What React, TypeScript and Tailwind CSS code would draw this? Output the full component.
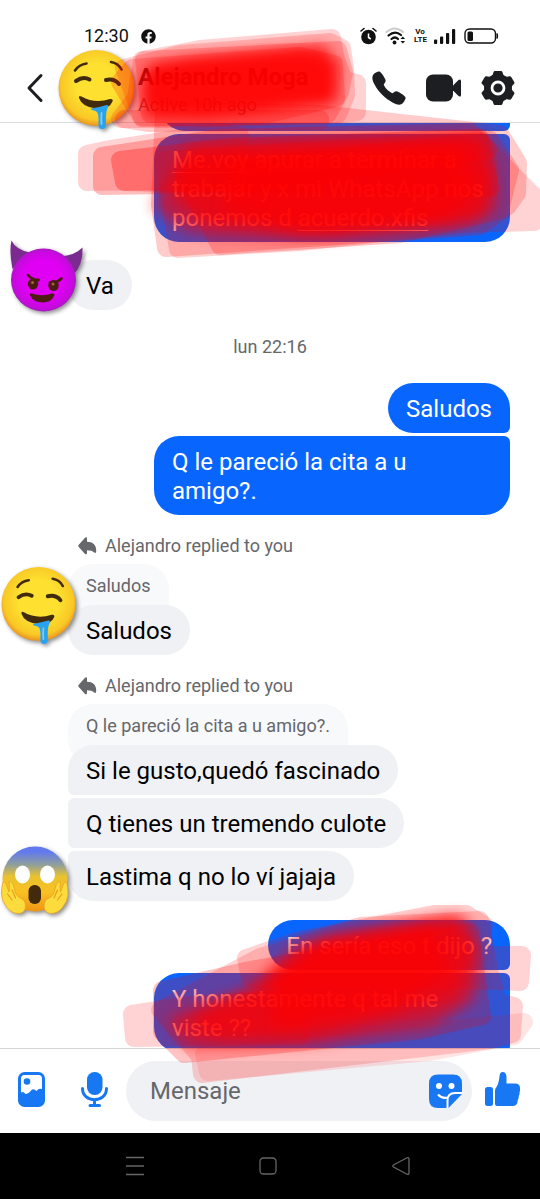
import type { ReactNode } from 'react'
import { FaFacebook } from 'react-icons/fa'
import { IoCall } from 'react-icons/io5'

const bubbleBase = 'px-[18px] pt-3 pb-[9px] text-2xl leading-[29px]'

function Sent({ children, className = '' }: { children: ReactNode; className?: string }) {
  return (
    <div className={`${bubbleBase} max-w-[356px] self-end bg-[#0866ff] text-white ${className}`}>
      {children}
    </div>
  )
}

function Received({ children, className = '' }: { children: ReactNode; className?: string }) {
  return (
    <div className={`${bubbleBase} relative self-start bg-[#f0f1f5] text-black ${className}`}>
      {children}
    </div>
  )
}

function ReplyLabel() {
  return (
    <div className="flex items-center gap-2 pt-5 pb-[7px] pl-[10px] text-lg leading-[22px] text-[#65676b]">
      <svg width="19" height="18" viewBox="0 0 19 18" fill="currentColor">
        <path d="M9 1.500v3.300c6 0 9.500 3.600 9.200 9.200 0 2-1 2.500-2 1.500-1.600-1.600-3.700-2.300-7.200-2.300v2.700c0 1.500-1.200 1.800-2.200.9L1 10.200a1.800 1.800 0 0 1 0-2.700L6.800 1C7.800 0 9 .2 9 1.500z" />
      </svg>
      <span>Alejandro replied to you</span>
    </div>
  )
}

function Quote({ children }: { children: ReactNode }) {
  return (
    <div className="-mb-[19px] h-[60px] self-start rounded-[25px] rounded-br-md bg-[#f8f9fb] px-[18px] pt-[11px] text-lg leading-[22px] text-[#65676b]">
      {children}
    </div>
  )
}

function DroolFace({ className = '' }: { className?: string }) {
  return (
    <svg viewBox="0 0 78 80" className={`drop-shadow-[2px_2px_2px_rgba(0,0,0,0.45)] ${className}`}>
      <defs>
        <radialGradient id="droolFill" cx="0.5" cy="0.45" r="0.55">
          <stop offset="0.5" stopColor="#fde030" />
          <stop offset="0.85" stopColor="#f9c825" />
          <stop offset="1" stopColor="#e8921f" />
        </radialGradient>
      </defs>
      <circle cx="38.500" cy="38" r="38" fill="url(#droolFill)" />
      <g fill="none" stroke="#422b0d" strokeLinecap="round">
        <path d="M17 20.500Q21 14.500 28.500 13.500" strokeWidth="2.600" />
        <path d="M53 12Q60 13 63.500 19.500" strokeWidth="2.600" />
        <path d="M18 31Q25 26 31.500 29.500" strokeWidth="4" />
        <path d="M48 30Q56 28 61 34" strokeWidth="4" />
      </g>
      <path d="M21 48q-.5-3 2.500-1.500Q37 54 52 49q3.500-.5 2.500 2.500Q51 60 38 58.500 24 57 21 48z" fill="#422b0d" />
      <path d="M33 58.500Q42 57 48.500 55q2.500-.5 1.500 2-2 4-2 10v7.500q0 4.500-3.800 4.500T40.500 75.500V68q0-7-4.500-7.500-3.500-.5-3-2z" fill="#29a3ee" />
      <path d="M43.500 63q-.5 6 0 11" stroke="#7dcdf8" strokeWidth="1.800" strokeLinecap="round" fill="none" />
    </svg>
  )
}

function DevilFace({ className = '' }: { className?: string }) {
  return (
    <svg viewBox="0 0 78 80" className={`drop-shadow-[2px_2px_2px_rgba(0,0,0,0.45)] ${className}`}>
      <defs>
        <radialGradient id="devilFill" cx="0.5" cy="0.5" r="0.52">
          <stop offset="0.6" stopColor="#e000f4" />
          <stop offset="0.88" stopColor="#c50add" />
          <stop offset="1" stopColor="#9c1fb4" />
        </radialGradient>
      </defs>
      <path d="M3.500 2.500Q1 13 4.500 31L22 14.500Q8 12 3.500 2.500zM74.500 9.500Q67 17.500 52 18.500L66 36Q75 27 74.500 9.500z" fill="#7b2a8f" />
      <ellipse cx="35.500" cy="42" rx="32.500" ry="31.500" fill="url(#devilFill)" />
      <g fill="#4b1c12">
        <ellipse cx="25" cy="46" rx="5.200" ry="5.500" />
        <ellipse cx="45.500" cy="47.500" rx="5.200" ry="5.500" />
        <path d="M22 57.500q-1-3 2-2 10 3.500 20 0 3.500-.5 2 2.500-3 6.500-11 6.500-9.500 0-13-7z" />
      </g>
      <path d="M20 37q4 5 10.500 5M53.500 40.500q-4.500 4.500-11.500 4" stroke="#4b1c12" strokeWidth="2.800" strokeLinecap="round" fill="none" />
      <circle cx="24.500" cy="44.500" r="1.500" fill="#a1683a" />
      <circle cx="45" cy="46" r="1.500" fill="#a1683a" />
    </svg>
  )
}

function ScreamFace({ className = '' }: { className?: string }) {
  return (
    <svg viewBox="0 0 72 72" className={`drop-shadow-[2px_2px_2px_rgba(0,0,0,0.45)] ${className}`}>
      <defs>
        <linearGradient id="screamFill" x1="0" y1="0" x2="0" y2="1">
          <stop offset="0.080" stopColor="#6179ee" />
          <stop offset="0.280" stopColor="#8f9f9c" />
          <stop offset="0.460" stopColor="#e8c22f" />
          <stop offset="0.700" stopColor="#f9c122" />
          <stop offset="1" stopColor="#ef9414" />
        </linearGradient>
      </defs>
      <circle cx="35" cy="34" r="32.500" fill="url(#screamFill)" />
      <ellipse cx="22.500" cy="29.500" rx="7.500" ry="9" fill="#fff" />
      <ellipse cx="47.500" cy="29.500" rx="7.500" ry="9" fill="#fff" />
      <rect x="28.500" y="40" width="12.500" height="19" rx="6" fill="#422b0d" />
      <g fill="#fcdc3c" stroke="#e99a20" strokeWidth="0.700">
        <path d="M3 37q2-1 3 2l3 8q1-5 0-10 2-1.500 4 2l3 10q2 3 4.500 4 5 2 5 8 0 7-6.500 7.500-7.500 0-12-6-5-6-5.500-13 0-8 1.500-12.500z" />
        <path d="M66.500 37q-2-1-3 2l-3 8q-1-5 0-10-2-1.500-4 2l-3 10q-2 3-4.500 4-5 2-5 8 0 7 6.500 7.500 7.500 0 12-6 5-6 5.500-13 0-8-1.500-12.500z" />
      </g>
      <path d="M7.500 49l4.500 6M12 45l3.500 8M62 49l-4.500 6M57.500 45l-3.500 8" stroke="#e99a20" strokeWidth="1.200" strokeLinecap="round" />
    </svg>
  )
}

// translucent marker strokes, drawn back to front
const strokes: [string, number][] = [
  // header
  ['142 60 200 49 332 38 336 60 344 80 357 83 357 112 335 115 170 119 120 119 136 98', 0.17],
  ['124 68 180 54 330 42 342 48 345 68 346 95 338 114 200 117 142 117', 0.17],
  ['144 60 260 54 338 50 344 72 340 92 328 114 150 114', 0.2],
  ['120 82 132 68 300 56 334 64 336 98 260 116 142 118', 0.2],
  // first sent message
  ['87 154 105 150 220 132 240 136 230 180 87 182', 0.17],
  ['102 156 220 138 470 132 488 150 230 184 102 186', 0.25],
  ['120 160 230 147 480 138 490 188 240 184 124 182', 0.3],
  ['164 110 320 114 500 134 518 163 517 193 508 206 480 226 166 248 160 205', 0.2],
  ['164 160 480 140 508 170 534 196 534 222 460 224 300 242 178 249', 0.17],
  ['184 175 490 140 510 170 500 210 400 234 220 246', 0.2],
  ['124 119 320 119 320 121 150 123', 0.2],
  // last sent messages
  ['246 958 300 940 434 914 466 914 484 925 478 955 522 955 520 982 470 980 250 978', 0.17],
  ['260 957 360 926 480 920 490 975 498 1002 514 1006 512 1034 490 1040 202 1074 200 1056 160 1010', 0.17],
  ['132 1014 190 1005 300 998 300 1036 134 1038', 0.17],
  ['162 990 250 970 470 932 482 1016 420 1030 184 1054 162 1032', 0.22],
  ['204 1054 524 1022 514 1036 430 1052 208 1072', 0.1],
]

const cores: [string, number][] = [
  ['150 76 190 66 322 52 328 96 250 106 152 110', 0.7],
  ['156 70 300 58 332 66 328 94 200 108 150 102', 0.7],
  ['190 152 260 146 480 140 488 165 490 205 460 220 300 232 190 226 160 205', 0.55],
  ['196 158 470 148 484 180 478 212 330 230 210 216 180 196', 0.6],
  ['240 164 450 154 470 190 440 214 300 222 230 205', 0.6],
  ['300 950 340 940 460 922 474 950 468 996 430 1020 300 1038 190 1040 176 1022 250 996', 0.6],
  ['320 946 450 924 466 950 450 994 320 1028 220 1032 200 1020 270 990', 0.6],
  ['330 950 430 934 440 970 390 1002 280 1020 280 980', 0.6],
]

function MarkerStrokes() {
  return (
    <svg viewBox="0 0 540 1199" className="pointer-events-none absolute inset-x-0 top-0 w-full" aria-hidden="true">
      <defs>
        <filter id="soft" x="-10%" y="-30%" width="120%" height="160%">
          <feGaussianBlur stdDeviation="7" />
        </filter>
      </defs>
      {strokes.map(([points, opacity]) => (
        <polygon key={points} points={points} opacity={opacity} fill="#f00" stroke="#f00" strokeWidth="18" strokeLinejoin="round" />
      ))}
      {cores.map(([points, opacity]) => (
        <polygon key={points} points={points} opacity={opacity} fill="#f00" stroke="#f00" strokeWidth="14" strokeLinejoin="round" filter="url(#soft)" />
      ))}
    </svg>
  )
}

function StatusBar() {
  return (
    <div className="flex h-[54px] items-center pt-[18px] pr-[41px] pl-[84px] text-[#111]">
      <span className="text-lg leading-5">12:30</span>
      <FaFacebook className="ml-3" size={15} />
      <div className="ml-auto flex items-center gap-2">
        <svg width="17" height="18" viewBox="0 0 17 18">
          <circle cx="8.500" cy="10" r="7.300" fill="#111" />
          <path d="M1 4l3-2.500M16 4l-3-2.500" stroke="#111" strokeWidth="1.600" strokeLinecap="round" />
          <path d="M8.500 6.500V10.500l2.300 1.500" stroke="#fff" strokeWidth="1.500" fill="none" />
        </svg>
        <svg width="21" height="18" viewBox="0 0 21 18" fill="none" strokeLinecap="round">
          <path d="M1.500 5Q9.500-2 18 5" stroke="#ccc" strokeWidth="2" />
          <path d="M3.500 8.500Q10 3 16 8M6.500 12Q10 9 13 12" stroke="#111" strokeWidth="2.200" />
          <circle cx="9.500" cy="15.500" r="1.900" fill="#111" />
          <path d="M15.500 12l2.300-2.500 2.300 2.500zM15.500 14l2.300 2.500 2.300-2.500z" fill="#111" />
        </svg>
        <span className="w-3 text-center text-[8px] leading-[8px] font-bold">
          Vo
          <br />
          LTE
        </span>
        <svg width="22" height="16" viewBox="0 0 22 16" fill="#111">
          <rect x="0" y="11.500" width="3.200" height="4.500" rx="1" />
          <rect x="6" y="8.500" width="3.200" height="7.500" rx="1" />
          <rect x="12" y="5" width="3.200" height="11" rx="1" />
          <rect x="18" y="1" width="3.200" height="15" rx="1" />
        </svg>
        <svg width="35" height="16" viewBox="0 0 35 16">
          <rect x="1" y="1" width="30.500" height="14" rx="4.500" fill="none" stroke="#111" strokeWidth="1.400" />
          <rect x="3.500" y="3.500" width="5.500" height="9.500" rx="1.500" fill="#111" />
          <path d="M33 5.500q1.500 2.500 0 5z" fill="#111" stroke="#111" />
        </svg>
      </div>
    </div>
  )
}

function Header() {
  return (
    <header className="shrink-0 border-b border-[#dcdde0] bg-white">
      <StatusBar />
      <div className="flex h-[68px] items-center pr-6 pl-[26px] text-[#1c1e21]">
        <button type="button" aria-label="Back" className="mr-[14px] shrink-0">
          <svg width="18" height="30" viewBox="0 0 18 30" fill="none" stroke="currentColor" strokeWidth="3" strokeLinecap="round" strokeLinejoin="round">
            <path d="M15 2.500L3 15l12 12.500" />
          </svg>
        </button>
        <DroolFace className="mt-1 h-20 w-[78px] shrink-0" />
        <div className="ml-[2px] min-w-0 flex-1 pt-[6px] whitespace-nowrap">
          <h1 className="text-2xl leading-7 font-bold">Alejandro Moga</h1>
          <p className="text-lg leading-7 text-[#65676b]">Active 10h ago</p>
        </div>
        <div className="flex shrink-0 items-center gap-[18px]">
          <button type="button" aria-label="Call">
            <IoCall size={38} />
          </button>
          <button type="button" aria-label="Video call">
            <svg width="36" height="28" viewBox="0 0 36 28" fill="currentColor">
              <rect x="0" y="0.500" width="27" height="27" rx="7" />
              <path d="M27 11.500l5.500-5.500q2.500-1.500 2.500 1v14q0 2.500-2.500 1L27 16.500z" />
            </svg>
          </button>
          <button type="button" aria-label="Settings">
            <svg width="36" height="36" viewBox="-18 -18 36 36">
              <circle r="14" fill="currentColor" />
              <g fill="currentColor" stroke="currentColor" strokeWidth="3" strokeLinejoin="round">
                <path d="M-3-15.500h6l2 6v19l-2 6h-6l-2-6v-19z" />
                <path d="M-3-15.500h6l2 6v19l-2 6h-6l-2-6v-19z" transform="rotate(60)" />
                <path d="M-3-15.500h6l2 6v19l-2 6h-6l-2-6v-19z" transform="rotate(120)" />
              </g>
              <circle r="6" fill="currentColor" stroke="#fff" strokeWidth="2.800" />
            </svg>
          </button>
        </div>
      </div>
    </header>
  )
}

function Composer() {
  return (
    <form className="flex h-[85px] shrink-0 items-center border-t border-[#d3d4d8] bg-white pr-5 pl-[18px] text-[#1877f2]">
      <button type="button" aria-label="Gallery" className="pb-1">
        <svg width="27" height="35" viewBox="0 0 27 35">
          <rect x="1.500" y="1.500" width="24" height="32" rx="5" fill="#fff" stroke="currentColor" strokeWidth="3" />
          <path d="M1.500 22q3-4 6 0 3 0 6-4 2-2 5 1 3-4 7-1v11q0 4.500-5 4.500h-14q-5 0-5-4.500z" fill="currentColor" />
          <circle cx="9" cy="9.500" r="3.300" fill="currentColor" />
        </svg>
      </button>
      <button type="button" aria-label="Voice message" className="ml-9 pb-1">
        <svg width="27" height="35" viewBox="0 0 27 35" fill="none" stroke="currentColor" strokeWidth="3" strokeLinecap="round">
          <rect x="6" y="0" width="15.500" height="23" rx="7.500" fill="currentColor" stroke="none" />
          <path d="M1.500 16.500c0 15 24 15 24 0M13.500 28v5M9 33.500h9.500" />
        </svg>
      </button>
      <div className="ml-[18px] flex h-[60px] min-w-0 flex-1 items-center rounded-full bg-[#f0f1f5] pr-[10px] pl-6">
        <input
          type="text"
          aria-label="Mensaje"
          placeholder="Mensaje"
          className="w-full min-w-0 flex-1 bg-transparent text-2xl text-black outline-none placeholder:text-[#65676b]"
        />
        <button type="button" aria-label="Stickers">
          <svg width="33" height="34" viewBox="0 0 33 34">
            <path d="M9 .5h15q9 0 9 9v10.500L19.500 34H9q-9 0-9-9V9.500q0-9 9-9z" fill="currentColor" />
            <circle cx="10" cy="12" r="3" fill="#fff" />
            <circle cx="22.500" cy="12" r="3" fill="#fff" />
            <path d="M18.500 34v-7.500q0-7.500 7.500-7.500h7M9 20.500q4 4.500 9.500 3" fill="none" stroke="#fff" strokeWidth="2" />
          </svg>
        </button>
      </div>
      <button type="button" aria-label="Like" className="ml-[13px] pb-1">
        <svg width="35" height="35" viewBox="0 0 35 35" fill="currentColor">
          <rect x="0" y="15" width="8" height="19" rx="2.500" />
          <path d="M10 18.500q0-2 1.500-3.500 2.500-4 3-11 .5-4 3-4 4 0 4 5.500V11.500h8.500q5 0 5 4.500.5 2-.5 4 .5 2-.8 4 .3 2-1 4 0 6-5.200 6H12q-2 0-2-2z" />
        </svg>
      </button>
    </form>
  )
}

function SystemNav() {
  return (
    <nav className="grid h-[66px] shrink-0 grid-cols-3 items-center justify-items-center bg-black pr-18 pl-17 text-[#666]">
      <button type="button" aria-label="Recent apps">
        <svg width="18" height="20" viewBox="0 0 18 20" stroke="currentColor" strokeWidth="1.500">
          <path d="M0 1.500h18M0 10h18M0 18.500h18" />
        </svg>
      </button>
      <button type="button" aria-label="Home">
        <svg width="18" height="18" viewBox="0 0 18 18" fill="none" stroke="currentColor" strokeWidth="1.300">
          <rect x="1" y="1" width="16" height="16" rx="3.500" />
        </svg>
      </button>
      <button type="button" aria-label="Go back">
        <svg width="18" height="18" viewBox="0 0 18 18" fill="none" stroke="currentColor" strokeWidth="1.300">
          <path d="M1.500 8L15 .8q2-.5 2 1.200v14q0 1.700-2 1.200L1.500 10q-1.500-1 0-2z" />
        </svg>
      </button>
    </nav>
  )
}

export default function App() {
  return (
    <div className="relative flex h-screen flex-col overflow-hidden bg-white font-['Roboto',sans-serif]">
      <Header />

      <main className="flex min-h-0 flex-1 flex-col overflow-hidden pr-[30px]">
        <div className="flex shrink-0 flex-col gap-[3px]">
          <div className="-mt-[42px] h-[50px] w-[350px] self-end rounded-[25px] rounded-r-md bg-[#0866ff]" />
          <Sent className="w-full rounded-[25px] rounded-tr-md">
            <span className="underline decoration-1 underline-offset-4">Me.voy</span> apurar a terminar a
            <br />
            trabajar y x mi WhatsApp nos
            <br />
            ponemos d <span className="underline decoration-1 underline-offset-4">acuerdo.xfis</span>
          </Sent>
        </div>

        <div className="relative mt-[18px] flex shrink-0 flex-col pl-[68px]">
          <Received className="rounded-[25px]">Va</Received>
          <DevilFace className="absolute -bottom-2 left-2 h-20 w-[78px]" />
        </div>

        <time className="-mr-[30px] flex h-[73px] shrink-0 items-center justify-center pt-px text-lg text-[#65676b]">
          lun 22:16
        </time>

        <div className="flex shrink-0 flex-col gap-[3px]">
          <Sent className="rounded-[25px] rounded-br-md">Saludos</Sent>
          <Sent className="rounded-[25px] rounded-tr-md">Q le pareció la cita a u amigo?.</Sent>
        </div>

        <div className="relative flex shrink-0 flex-col pl-[68px]">
          <ReplyLabel />
          <Quote>Saludos</Quote>
          <Received className="rounded-[25px]">Saludos</Received>
          <DroolFace className="absolute bottom-[10px] left-px h-[78px] w-[76px]" />
        </div>

        <div className="relative flex shrink-0 flex-col pl-[68px]">
          <ReplyLabel />
          <Quote>Q le pareció la cita a u amigo?.</Quote>
          <div className="flex flex-col gap-[3px]">
            <Received className="rounded-[25px] rounded-bl-md">Si le gusto,quedó fascinado</Received>
            <Received className="rounded-[25px] rounded-l-md">Q tienes un tremendo culote</Received>
            <Received className="rounded-[25px] rounded-tl-md">Lastima q no lo ví jajaja</Received>
          </div>
          <ScreamFace className="absolute -bottom-4 left-0 size-[72px]" />
        </div>

        <div className="mt-[19px] flex shrink-0 flex-col gap-[3px]">
          <Sent className="rounded-[25px] rounded-br-md">En sería eso t dijo ?</Sent>
          <Sent className="rounded-[25px] rounded-r-md">Y honestamente q tal me viste ??</Sent>
        </div>
      </main>

      <Composer />
      <SystemNav />
      <MarkerStrokes />
    </div>
  )
}
